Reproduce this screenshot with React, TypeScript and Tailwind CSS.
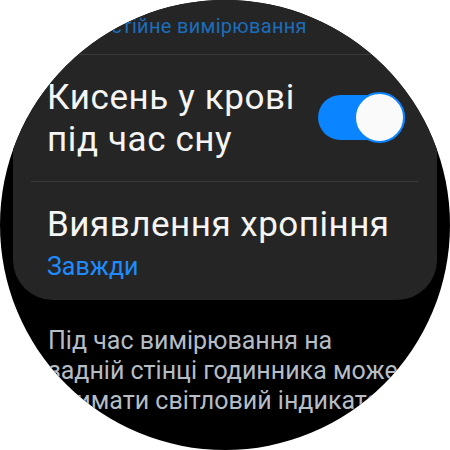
import React from "react";

export default function App() {
  return (
    <div className="w-[450px] h-[450px] bg-white overflow-hidden" style={{ fontFamily: "Roboto, 'Noto Sans', sans-serif" }}>
      <div className="w-[450px] h-[450px] rounded-full bg-black overflow-hidden">
        <div className="mx-[13px] bg-[#252525] rounded-b-[40px] pt-[14px] pb-[18px]">
          <div className="pl-[72px] text-[20px] leading-[24px] tracking-[0.3px] text-[#1b6dbb] whitespace-nowrap">
            Постійне вимірювання
          </div>
          <div className="mt-[16px] mx-[18px] h-px bg-[#3a3a3a]" />
          <div className="mt-[22px] px-[34px] flex items-center">
            <div className="flex-1 text-[35px] leading-[42px] tracking-[0.6px] text-[#f5f5f5]">
              <div>Кисень у крові</div>
              <div>під час сну</div>
            </div>
            <div className="relative w-[87px] h-[45px] rounded-full bg-[#0a84ff] mr-[-2px] mb-[4px]">
              <div className="absolute right-0 top-[-3px] w-[51px] h-[51px] rounded-full bg-[#fafafa] border-2 border-[#0a84ff]" />
            </div>
          </div>
          <div className="mt-[20px] mx-[18px] h-px bg-[#3a3a3a]" />
          <div className="mt-[22px] px-[34px]">
            <div className="text-[35px] leading-[42px] tracking-[0.5px] text-[#f5f5f5] whitespace-nowrap">Виявлення хропіння</div>
            <div className="mt-[6px] text-[25px] leading-[30px] text-[#1f8bff]">Завжди</div>
          </div>
        </div>
        <div className="mt-[26px] pl-[48px] text-[25px] leading-[30px] text-[#b6bdc5] whitespace-nowrap">
          <div>Під час вимірювання на</div>
          <div>задній стінці годинника може</div>
          <div>блимати світловий індикатор.</div>
        </div>
      </div>
    </div>
  );
}
